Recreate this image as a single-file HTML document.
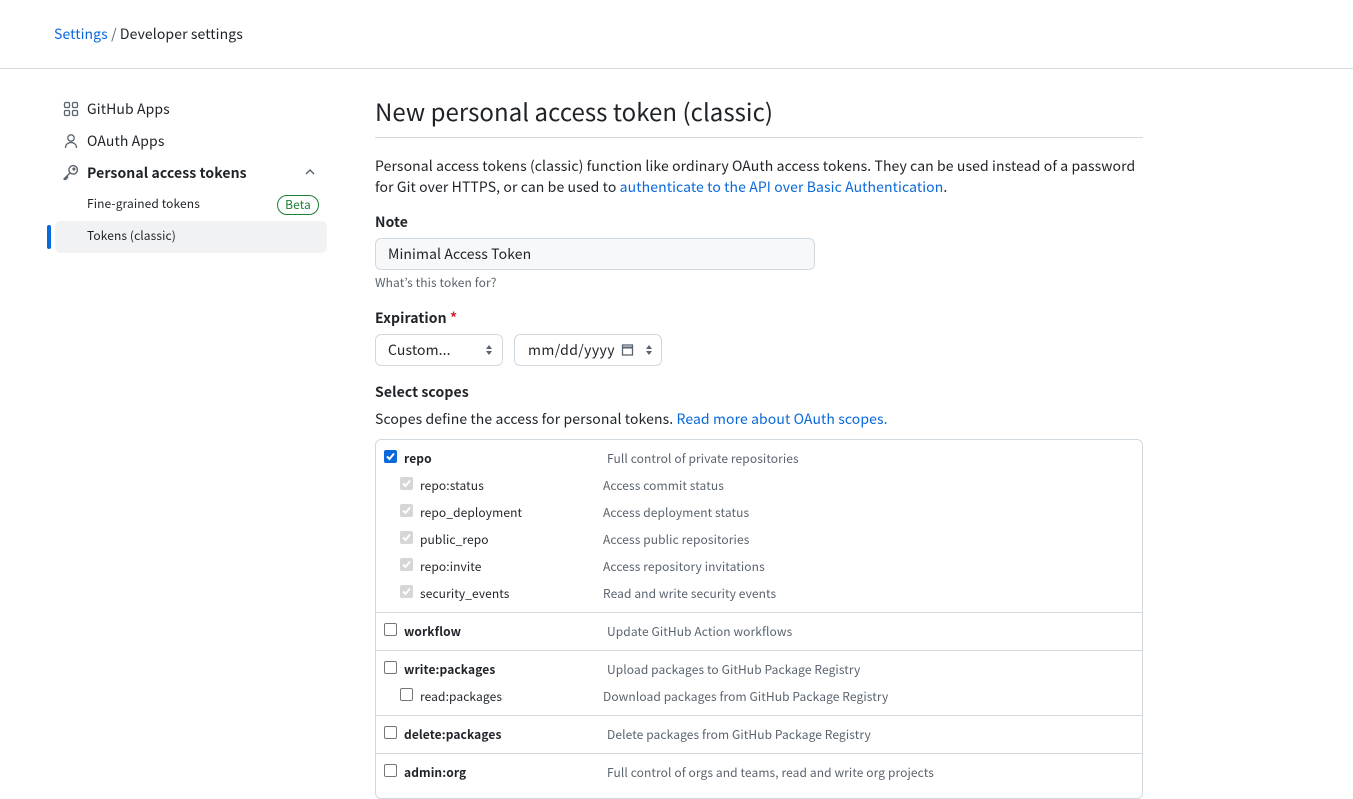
<!DOCTYPE html>
<html><head><meta charset="utf-8"><style>
*{box-sizing:border-box;margin:0;padding:0}
body{width:1353px;height:786px;overflow:hidden;background:#fff;font-family:"Noto Sans CJK JP","Liberation Sans",sans-serif;color:#1f2328;font-size:14px;position:relative;letter-spacing:0.1px}
.a{position:absolute;white-space:nowrap;line-height:1}
.lnk{color:#0969da;text-decoration:none}
.hdr{position:absolute;left:0;top:68px;width:1353px;height:1px;background:#d1d9e0}
.sel{position:absolute;left:55px;top:221px;width:272px;height:32px;background:#f1f2f4;border-radius:6px}
.bar{position:absolute;left:47px;top:225px;width:4px;height:24px;background:#0969da;border-radius:2px}
.box{position:absolute;left:375px;top:439px;width:768px;height:360px;border:1px solid #d1d9e0;border-radius:6px}
.sep{position:absolute;left:376px;width:766px;height:1px;background:#d1d9e0}
.cb{position:absolute;width:13px;height:13px;border:1px solid #767676;border-radius:2px;background:#fff}
.cb.on{background:#0969da;border-color:#0969da}
.cb.dis{background:#d6d6d6;border-color:#d6d6d6}
.cb svg{position:absolute;left:0px;top:0px}
.inp{position:absolute;border:1px solid #d1d9e0;border-radius:6px;background:#f6f8fa}
.s{font-size:12px}
.g{color:#59636e}
</style></head><body>
<div class="a" style="left:54px;top:27px"><span class="lnk">Settings</span> <span class="g">/</span> Developer settings</div>
<div class="hdr"></div>

<svg class="a" style="left:63px;top:101px" width="16" height="16" viewBox="0 0 16 16" fill="none" stroke="#59636e" stroke-width="1.3"><rect x="1.5" y="1.5" width="5" height="5" rx="1.2"/><rect x="9.5" y="1.5" width="5" height="5" rx="1.2"/><rect x="1.5" y="9.5" width="5" height="5" rx="1.2"/><rect x="9.5" y="9.5" width="5" height="5" rx="1.2"/></svg>
<div class="a" style="left:87px;top:102px">GitHub Apps</div>
<svg class="a" style="left:63px;top:133px" width="16" height="16" viewBox="0 0 16 16" fill="none" stroke="#59636e" stroke-width="1.3"><circle cx="8" cy="5" r="3.2"/><path d="M2.5 15c0-3.5 2.5-5.5 5.5-5.5s5.5 2 5.5 5.5"/></svg>
<div class="a" style="left:87px;top:134px">OAuth Apps</div>
<svg class="a" style="left:62px;top:164px" width="17" height="17" viewBox="0 0 16 16" fill="none" stroke="#59636e" stroke-width="1.3"><circle cx="10.5" cy="5.5" r="4"/><path d="M7.5 8.5L1.5 14.5M1.5 14.5h2.2v-1.5h1.5v-1.5"/><circle cx="11.2" cy="4.8" r="0.8" fill="#59636e"/></svg>
<div class="a" style="left:87px;top:166px;font-weight:bold">Personal access tokens</div>
<svg class="a" style="left:304px;top:167px" width="12" height="10" viewBox="0 0 12 10" fill="none" stroke="#59636e" stroke-width="1.4"><path d="M2 7l4-4 4 4"/></svg>
<div class="a s" style="left:87px;top:198px">Fine-grained tokens</div>
<div class="a" style="left:277px;top:195px;width:42px;height:20px;border:1px solid #1a7f37;border-radius:10px;color:#1a7f37;font-size:12px;text-align:center;line-height:18px">Beta</div>
<div class="sel"></div><div class="bar"></div>
<div class="a s" style="left:87px;top:230px">Tokens (classic)</div>

<div class="a" style="left:375px;top:99px;font-size:24px;letter-spacing:0.05px">New personal access token (classic)</div>
<div class="a" style="left:375px;top:137px;width:768px;height:1px;background:#d1d9e0"></div>
<div class="a" style="left:375px;top:156px;line-height:21px">Personal access tokens (classic) function like ordinary OAuth access tokens. They can be used instead of a password<br>for Git over HTTPS, or can be used to <span class="lnk">authenticate to the API over Basic Authentication</span>.</div>
<div class="a" style="left:375px;top:215px;font-weight:bold">Note</div>
<div class="inp" style="left:375px;top:238px;width:440px;height:32px"></div>
<div class="a" style="left:388px;top:247px">Minimal Access Token</div>
<div class="a s g" style="left:375px;top:277px">What’s this token for?</div>
<div class="a" style="left:375px;top:311px;font-weight:bold">Expiration <span style="color:#d1242f">*</span></div>
<div class="a" style="left:375px;top:334px;width:128px;height:32px;border:1px solid #d1d9e0;border-radius:6px"></div>
<div class="a" style="left:388px;top:343px">Custom...</div>
<svg class="a" style="left:485px;top:344px" width="8" height="12" viewBox="0 0 8 12" fill="#59636e"><path d="M4 1L7 5H1zM4 11L1 7h6z"/></svg>
<div class="a" style="left:514px;top:334px;width:148px;height:32px;border:1px solid #d1d9e0;border-radius:6px"></div>
<div class="a" style="left:528px;top:343px;letter-spacing:0.4px">mm/dd/yyyy</div>
<svg class="a" style="left:621px;top:343px" width="13" height="13" viewBox="0 0 13 13" fill="none" stroke="#59636e" stroke-width="1.3"><rect x="1.5" y="2" width="10" height="10"/><path d="M1.5 4.5h10" stroke-width="2"/></svg>
<svg class="a" style="left:645px;top:344px" width="8" height="12" viewBox="0 0 8 12" fill="#59636e"><path d="M4 1L7 5H1zM4 11L1 7h6z"/></svg>
<div class="a" style="left:375px;top:385px;font-weight:bold">Select scopes</div>
<div class="a" style="left:375px;top:412px">Scopes define the access for personal tokens. <span class="lnk">Read more about OAuth scopes.</span></div>

<div class="box"></div>
<div class="sep" style="top:612px"></div>
<div class="sep" style="top:650px"></div>
<div class="sep" style="top:715px"></div>
<div class="sep" style="top:753px"></div>

<div class="cb on" style="left:384px;top:450px"><svg width="11" height="11" viewBox="0 0 11 11" fill="none" stroke="#fff" stroke-width="2"><path d="M2 5.5l2.5 2.5L9 2.5"/></svg></div>
<div class="a s" style="left:404px;top:453px;font-weight:bold">repo</div>
<div class="a s g" style="left:607px;top:453px">Full control of private repositories</div>

<div class="cb dis" style="left:400px;top:477px"><svg width="11" height="11" viewBox="0 0 11 11" fill="none" stroke="#fff" stroke-width="2"><path d="M2 5.5l2.5 2.5L9 2.5"/></svg></div>
<div class="a s" style="left:420px;top:480px">repo:status</div>
<div class="a s g" style="left:603px;top:480px">Access commit status</div>
<div class="cb dis" style="left:400px;top:504px"><svg width="11" height="11" viewBox="0 0 11 11" fill="none" stroke="#fff" stroke-width="2"><path d="M2 5.5l2.5 2.5L9 2.5"/></svg></div>
<div class="a s" style="left:420px;top:507px">repo_deployment</div>
<div class="a s g" style="left:603px;top:507px">Access deployment status</div>
<div class="cb dis" style="left:400px;top:531px"><svg width="11" height="11" viewBox="0 0 11 11" fill="none" stroke="#fff" stroke-width="2"><path d="M2 5.5l2.5 2.5L9 2.5"/></svg></div>
<div class="a s" style="left:420px;top:534px">public_repo</div>
<div class="a s g" style="left:603px;top:534px">Access public repositories</div>
<div class="cb dis" style="left:400px;top:558px"><svg width="11" height="11" viewBox="0 0 11 11" fill="none" stroke="#fff" stroke-width="2"><path d="M2 5.5l2.5 2.5L9 2.5"/></svg></div>
<div class="a s" style="left:420px;top:561px">repo:invite</div>
<div class="a s g" style="left:603px;top:561px">Access repository invitations</div>
<div class="cb dis" style="left:400px;top:585px"><svg width="11" height="11" viewBox="0 0 11 11" fill="none" stroke="#fff" stroke-width="2"><path d="M2 5.5l2.5 2.5L9 2.5"/></svg></div>
<div class="a s" style="left:420px;top:588px">security_events</div>
<div class="a s g" style="left:603px;top:588px">Read and write security events</div>

<div class="cb" style="left:384px;top:623px"></div>
<div class="a s" style="left:404px;top:626px;font-weight:bold">workflow</div>
<div class="a s g" style="left:607px;top:626px">Update GitHub Action workflows</div>
<div class="cb" style="left:384px;top:661px"></div>
<div class="a s" style="left:404px;top:664px;font-weight:bold">write:packages</div>
<div class="a s g" style="left:607px;top:664px">Upload packages to GitHub Package Registry</div>
<div class="cb" style="left:400px;top:688px"></div>
<div class="a s" style="left:420px;top:691px">read:packages</div>
<div class="a s g" style="left:603px;top:691px">Download packages from GitHub Package Registry</div>
<div class="cb" style="left:384px;top:726px"></div>
<div class="a s" style="left:404px;top:729px;font-weight:bold">delete:packages</div>
<div class="a s g" style="left:607px;top:729px">Delete packages from GitHub Package Registry</div>
<div class="cb" style="left:384px;top:764px"></div>
<div class="a s" style="left:404px;top:767px;font-weight:bold">admin:org</div>
<div class="a s g" style="left:607px;top:767px">Full control of orgs and teams, read and write org projects</div>
</body></html>
